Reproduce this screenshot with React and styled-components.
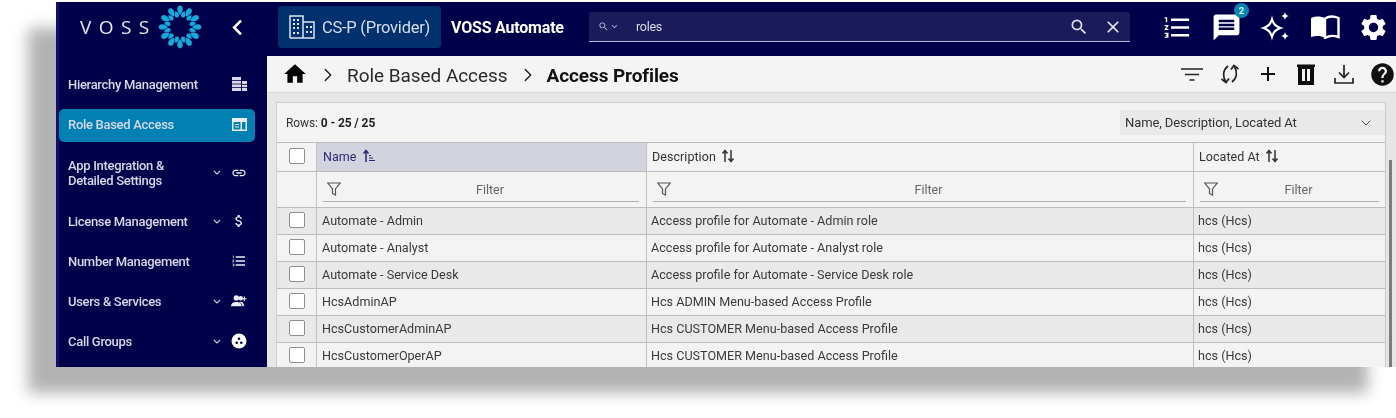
import React from 'react';
import styled, { createGlobalStyle } from 'styled-components';
import { ChevronDown, ChevronRight } from 'lucide-react';
import {
  MdAdd,
  MdAttachMoney,
  MdChevronLeft,
  MdClose,
  MdFormatListNumbered,
  MdHelp,
  MdHome,
  MdKeyboardArrowDown,
  MdLink,
  MdMessage,
  MdSearch,
  MdSettings,
} from 'react-icons/md';

const GlobalStyle = createGlobalStyle`
  html, body {
    margin: 0;
    height: 418px;
    overflow: hidden;
    background: #fff;
    font-family: Roboto, "Liberation Sans", sans-serif;
  }
`;

const Frame = styled.div`
  margin: 2px 0 0 56px;
  width: 1340px;
  height: 365px;
  display: grid;
  grid-template-columns: 211px 1fr;
  box-shadow: -28px 26px 14px rgba(0, 0, 0, 0.3);
  filter: blur(0.4px);
`;

const Sidebar = styled.aside`
  background: #00004a;
  border-left: 3px solid #10106a;
  overflow: hidden;
`;

const LogoRow = styled.div`
  height: 50px;
  padding-bottom: 4px;
  margin-bottom: 12.5px;
  display: flex;
  align-items: center;
  color: #fff;
  padding-left: 21px;
`;

const LogoText = styled.span`
  font-family: "Open Sans", sans-serif;
  font-size: 19px;
  letter-spacing: 7.4px;
  color: #e8e8ee;
  width: 77px;
`;

const Collapse = styled.span`
  margin-left: 19px;
  display: flex;
  svg {
    font-size: 31px;
  }
`;

const Nav = styled.nav`
  display: flex;
  flex-direction: column;
  gap: 7px;
`;

const NavItem = styled.div`
  width: 196px;
  box-sizing: border-box;
  height: ${(props) => (props.$tall ? '50px' : '33px')};
  padding: 0 8px 2px 9px;
  display: flex;
  align-items: center;
  border-radius: 5px;
  background: ${(props) => (props.$active ? '#0080b3' : 'transparent')};
  color: #d8d8e6;
  font-size: 13px;
  font-weight: 500;
  line-height: 15px;
  letter-spacing: -0.3px;
`;

const NavLabel = styled.span`
  flex: 1;
`;

const NavChevron = styled.span`
  display: flex;
  width: 14px;
  margin-right: 7px;
  font-size: 15px;
`;

const NavIcon = styled.span`
  display: flex;
  justify-content: center;
  width: 16px;
  font-size: 16px;
  color: #ececf4;
`;

const Main = styled.main`
  min-width: 0;
  display: flex;
  flex-direction: column;
  overflow: hidden;
  background: #e6e6e6;
`;

const TopBar = styled.header`
  height: 50px;
  padding: 0 0 4px 11px;
  flex: none;
  background: #00004a;
  display: flex;
  align-items: center;
  color: #fff;
`;

const OrgButton = styled.div`
  flex: none;
  width: 163px;
  height: 42px;
  box-sizing: border-box;
  padding-left: 11px;
  display: flex;
  align-items: center;
  gap: 7px;
  border-radius: 4px;
  background: #00306e;
  font-size: 16.5px;
  letter-spacing: -0.25px;
  color: #d9dfea;
  white-space: nowrap;
`;

const Product = styled.span`
  flex: none;
  margin-left: 10px;
  width: 138px;
  font-size: 16px;
  font-weight: 700;
  letter-spacing: -0.2px;
  white-space: nowrap;
`;

const Search = styled.div`
  flex: none;
  width: 541px;
  height: 30px;
  box-sizing: border-box;
  display: flex;
  align-items: center;
  padding: 0 7px 0 9px;
  border-radius: 3px 3px 0 0;
  border-bottom: 1px solid #b4b4d0;
  background: #1b1b5c;
  font-size: 12.5px;
  letter-spacing: -0.3px;
  color: #dcdcec;
`;

const SearchScope = styled.span`
  display: flex;
  align-items: center;
  width: 38px;
  color: #b9b9d4;
  font-size: 11px;
`;

const SearchText = styled.span`
  flex: 1;
`;

const SearchAction = styled.span`
  display: flex;
  margin-left: 14px;
  font-size: 20px;
  color: #e2e2ee;
`;

const TopIcons = styled.div`
  flex: none;
  display: grid;
  grid-template-columns: repeat(5, 49px);
  padding-left: 23px;
  justify-items: center;
  align-items: center;
  font-size: 31px;
  svg {
    display: block;
  }
`;

const BadgeWrap = styled.span`
  position: relative;
  display: block;
`;

const Badge = styled.span`
  position: absolute;
  top: -9px;
  right: -7px;
  width: 15px;
  height: 15px;
  border-radius: 50%;
  background: #0a86b4;
  color: #e6f2f8;
  font-size: 9.5px;
  font-weight: 700;
  line-height: 15px;
  text-align: center;
`;

const Crumbs = styled.div`
  height: 37px;
  flex: none;
  background: #f4f4f4;
  border-bottom: 1px solid #d8d8d8;
  box-sizing: border-box;
  display: flex;
  align-items: center;
  padding: 2px 0 0 15px;
  font-size: 19px;
  color: #2a2a2a;
  white-space: nowrap;
`;

const HomeIcon = styled(MdHome)`
  font-size: 26px;
  color: #000;
  margin: -2px 9px 0 0;
`;

const CrumbSep = styled(ChevronRight)`
  width: 22px;
  height: 22px;
  color: #222;
  margin: -1px 8px 0 0;
`;

const CrumbLink = styled.span`
  margin-right: 9px;
  letter-spacing: -0.05px;
`;

const CrumbCurrent = styled.span`
  font-weight: 700;
  color: #111;
  letter-spacing: -0.1px;
`;

const CrumbTools = styled.div`
  margin: -2px -5px 0 auto;
  display: grid;
  grid-template-columns: repeat(6, 38px);
  justify-items: center;
  align-items: center;
  color: #111;
  svg {
    display: block;
  }
`;

const Body = styled.div`
  flex: 1;
  min-height: 0;
  display: grid;
  grid-template-columns: 1110px 10px;
  padding: 9px 0 0 9px;
  overflow: hidden;
`;

const Panel = styled.section`
  box-sizing: border-box;
  background: #f3f3f3;
  border-top: 1px solid #cfcfcf;
  border-left: 1px solid #cfcfcf;
  border-right: 1px solid #c8c8c8;
  overflow: hidden;
`;

const PanelBar = styled.div`
  height: 39px;
  display: flex;
  align-items: center;
  justify-content: space-between;
  padding-left: 9px;
  font-size: 12px;
  color: #333;
  letter-spacing: -0.1px;
  b {
    font-weight: 700;
    color: #222;
  }
`;

const ColumnSelect = styled.div`
  width: 265px;
  height: 25px;
  box-sizing: border-box;
  display: flex;
  align-items: center;
  justify-content: space-between;
  padding: 0 11px 0 5px;
  background: #e9e9e9;
  color: #333;
  font-size: 13px;
  svg {
    width: 16px;
    height: 16px;
    color: #444;
  }
`;

const Row = styled.div`
  display: grid;
  grid-template-columns: 40px 330px 547px 192px;
  height: ${(props) => props.$height || 27}px;
  box-sizing: border-box;
  border-top: 1px solid #bcbcbc;
  background: ${(props) => (props.$striped ? '#e9e9e9' : '#f3f3f3')};
`;

const Cell = styled.div`
  min-width: 0;
  display: flex;
  align-items: center;
  padding: 0 0 2px 5px;
  border-right: 1px solid #c0c0c0;
  font-size: 12.6px;
  color: #3a3a3a;
  white-space: nowrap;
  &:nth-child(n + 3) {
    padding-left: 4px;
  }
  &:last-child {
    border-right: 0;
  }
`;

const CheckCell = styled(Cell)`
  justify-content: center;
  padding-left: 0;
`;

const Check = styled.span`
  width: 16px;
  height: 16px;
  box-sizing: border-box;
  border: 1px solid #8f8f8f;
  border-radius: 2px;
  background: #fff;
`;

const HeadCell = styled(Cell)`
  gap: 5px;
  background: ${(props) => (props.$sorted ? '#d3d3df' : 'transparent')};
  color: ${(props) => (props.$sorted ? '#2b2b72' : '#333')};
  font-size: 12.5px;
  letter-spacing: 0.05px;
  && {
    padding-left: ${(props) => (props.$sorted ? 6 : 5)}px;
  }
`;

const FilterCell = styled(Cell)`
  padding: 0 7px 2px 6px;
  && {
    padding-left: 6px;
  }
`;

const FilterBox = styled.div`
  flex: 1;
  height: 25px;
  margin-top: 1px;
  display: flex;
  align-items: center;
  padding-left: 4px;
  border-bottom: 1px solid #aeaeae;
  color: #666;
  font-size: 12.5px;
`;

const FilterText = styled.span`
  flex: 1;
  text-align: center;
  margin-top: 2px;
`;

const Track = styled.div`
  display: flex;
  justify-content: center;
  padding: 58px 2px 0 0;
`;

const Thumb = styled.div`
  width: 3px;
  height: 100%;
  background: #7c7c7c;
`;

const DROPS_OUTER = Array.from({ length: 12 }, (_, i) => i * 30);
const DROPS_INNER = Array.from({ length: 12 }, (_, i) => i * 30 + 15);

function Logo() {
  return (
    <svg width="46" height="46" viewBox="-23 -23 46 46" fill="#16a9dc">
      {DROPS_OUTER.map((a) => (
        <path key={a} transform={`rotate(${a}) translate(0 -17)`} d="M0 5 C-4 1 -3.4 -4 0 -4.4 C3.4 -4 4 1 0 5Z" />
      ))}
      {DROPS_INNER.map((a) => (
        <path key={a} transform={`rotate(${a}) translate(0 -13)`} d="M0 -3.6 C-3 -.5 -2.6 3 0 3.2 C2.6 3 3 -.5 0 -3.6Z" />
      ))}
    </svg>
  );
}

function BuildingIcon() {
  return (
    <svg width="26" height="24" viewBox="0 0 26 24" fill="none" stroke="#dfe6f0" strokeWidth="1.5">
      <path d="M1 23V1h13v22M14 7h11v16H1" />
      <path d="M4 5h2M8 5h2M4 9h2M8 9h2M4 13h2M8 13h2M4 18h2M8 18h2M17 12h2M21 12h2M17 17h2M21 17h2" strokeWidth="2" />
    </svg>
  );
}

function SparkleIcon() {
  return (
    <svg width="31" height="30" viewBox="0 0 31 30" fill="#fff">
      <path d="M12 3 C13.5 11 16 14 24 16 C16 18 13.5 21 12 29 C10.5 21 8 18 0 16 C8 14 10.5 11 12 3Z M12 10 C11 13 9 15 6 16 C9 17 11 19 12 22 C13 19 15 17 18 16 C15 15 13 13 12 10Z" fillRule="evenodd" />
      <path d="M25 0 C25.5 2.5 26.5 3.5 29 4 C26.5 4.5 25.5 5.5 25 8 C24.5 5.5 23.5 4.5 21 4 C23.5 3.5 24.5 2.5 25 0Z" />
      <path d="M25 20 C25.5 22.5 26.5 23.5 29 24 C26.5 24.5 25.5 25.5 25 28 C24.5 25.5 23.5 24.5 21 24 C23.5 23.5 24.5 22.5 25 20Z" />
    </svg>
  );
}

function BookIcon() {
  return (
    <svg width="30" height="24" viewBox="0 0 30 24">
      <path d="M1 3 C6 1 11 1 15 3.5 V23 C11 20.5 6 20.5 1 22Z" fill="#fff" />
      <path d="M15 3.5 C19 1 24 1 28.5 3 V22 C24 20.5 19 20.5 15 23Z" fill="none" stroke="#fff" strokeWidth="2.4" />
    </svg>
  );
}

function FilterLines() {
  return (
    <svg width="22" height="14" viewBox="0 0 22 14" stroke="#222" strokeWidth="1.7">
      <path d="M0 2h22M4 7.5h14M8.5 13h5" />
    </svg>
  );
}

function RefreshIcon() {
  return (
    <svg width="20" height="22" viewBox="0 0 20 22" fill="none" stroke="#222" strokeWidth="1.8">
      <path d="M8 3 C3 7 2.5 13 5.5 18.5" />
      <path d="M1.5 16 L6 19.5 L9 15.5" />
      <path d="M12 19 C17 15 17.5 9 14.5 3.5" />
      <path d="M18.5 6 L14 2.5 L11 6.5" />
    </svg>
  );
}

function TrashIcon() {
  return (
    <svg width="18" height="22" viewBox="0 0 18 22">
      <path d="M0 1.5h18v2.5h-1V22H1V4H0Z M5 6v12h3V6Z M10 6v12h3V6Z" fill="#0c0c0c" fillRule="evenodd" />
    </svg>
  );
}

function DownloadIcon() {
  return (
    <svg width="20" height="20" viewBox="0 0 20 20" fill="none" stroke="#222" strokeWidth="1.7">
      <path d="M10 1v12M5 8.5l5 5 5-5M1 14v5h18v-5" />
    </svg>
  );
}

function FunnelIcon() {
  return (
    <svg width="14" height="14" viewBox="0 0 14 14" fill="none" stroke="#555" strokeWidth="1.2">
      <path d="M.8 1h12.4L8.5 7v6L5.5 11.5V7Z" />
    </svg>
  );
}

function SortIcon() {
  return (
    <svg width="14" height="14" viewBox="0 0 14 14" fill="none" stroke="#333" strokeWidth="1.5">
      <path d="M4 13V2M1.5 4.5 4 1.5l2.5 3M10 1v11M7.5 9.5 10 12.5l2.5-3" />
    </svg>
  );
}

function SortAscIcon() {
  return (
    <svg width="14" height="14" viewBox="0 0 14 14" fill="none" stroke="#2b2b72" strokeWidth="1.2">
      <path d="M4 13V2M1.5 4.5 4 1.5l2.5 3" strokeWidth="1.5" />
      <path d="M7 6.5h2M7 9h4M7 11.5h6" />
    </svg>
  );
}

function TableCardIcon() {
  return (
    <svg width="15" height="13" viewBox="0 0 15 13">
      <path d="M0 0h15v13H0Z M1.5 4v7.5h7V4Z M10 4v7.5h3.5V4Z" fill="#ececf4" fillRule="evenodd" />
      <path d="M3 6.5h4M3 9h4" stroke="#ececf4" />
    </svg>
  );
}

function HierarchyIcon() {
  return (
    <svg width="15" height="14" viewBox="0 0 15 14" fill="#d8d8e6">
      <path d="M0 0h9v14H0ZM10 4h5v10h-5Z" />
      <path d="M0 3.5h9M0 7h9M0 10.5h9M10 7.5h5M10 10.5h5" stroke="#00004a" strokeWidth=".8" />
    </svg>
  );
}

function UsersIcon() {
  return (
    <svg width="18" height="14" viewBox="0 0 18 14" fill="#ececf4">
      <circle cx="6" cy="3.5" r="3" />
      <circle cx="11" cy="4" r="2.5" />
      <path d="M0 13c0-3.5 2.5-5 6-5s6 1.500 6 5Z" />
      <path d="M9 8c3-.5 5.500.5 6 5h-2c0-2-1.500-4-4-5Z" />
      <path d="M15 2v5M12.5 4.5h5" stroke="#ececf4" strokeWidth="1.3" />
    </svg>
  );
}

function GroupIcon() {
  return (
    <svg width="16" height="16" viewBox="0 0 16 16">
      <circle cx="8" cy="8" r="7.5" fill="#fff" />
      <circle cx="8" cy="5.8" r="1.3" fill="#00004a" />
      <circle cx="5.7" cy="9.8" r="1.3" fill="#00004a" />
      <circle cx="10.3" cy="9.8" r="1.3" fill="#00004a" />
    </svg>
  );
}

const NAV_ITEMS = [
  { label: 'Hierarchy Management', icon: <HierarchyIcon /> },
  { label: 'Role Based Access', icon: <TableCardIcon />, active: true },
  { label: <>App Integration &<br />Detailed Settings</>, icon: <MdLink />, chevron: true, tall: true },
  { label: 'License Management', icon: <MdAttachMoney />, chevron: true },
  { label: 'Number Management', icon: <MdFormatListNumbered /> },
  { label: 'Users & Services', icon: <UsersIcon />, chevron: true },
  { label: 'Call Groups', icon: <GroupIcon />, chevron: true },
];

const ROWS = [
  ['Automate - Admin', 'Access profile for Automate - Admin role'],
  ['Automate - Analyst', 'Access profile for Automate - Analyst role'],
  ['Automate - Service Desk', 'Access profile for Automate - Service Desk role'],
  ['HcsAdminAP', 'Hcs ADMIN Menu-based Access Profile'],
  ['HcsCustomerAdminAP', 'Hcs CUSTOMER Menu-based Access Profile'],
  ['HcsCustomerOperAP', 'Hcs CUSTOMER Menu-based Access Profile'],
];

function FilterInput() {
  return (
    <FilterCell>
      <FilterBox>
        <FunnelIcon />
        <FilterText>Filter</FilterText>
      </FilterBox>
    </FilterCell>
  );
}

export default function App() {
  return (
    <>
      <GlobalStyle />
      <Frame>
        <Sidebar>
          <LogoRow>
            <LogoText>VOSS</LogoText>
            <Logo />
            <Collapse><MdChevronLeft /></Collapse>
          </LogoRow>
          <Nav>
            {NAV_ITEMS.map((item, i) => (
              <NavItem key={i} $active={item.active} $tall={item.tall}>
                <NavLabel>{item.label}</NavLabel>
                {item.chevron && <NavChevron><MdKeyboardArrowDown /></NavChevron>}
                <NavIcon>{item.icon}</NavIcon>
              </NavItem>
            ))}
          </Nav>
        </Sidebar>
        <Main>
          <TopBar>
            <OrgButton><BuildingIcon />CS-P (Provider)</OrgButton>
            <Product>VOSS Automate</Product>
            <Search>
              <SearchScope><MdSearch /><MdKeyboardArrowDown /></SearchScope>
              <SearchText>roles</SearchText>
              <SearchAction><MdSearch /></SearchAction>
              <SearchAction><MdClose /></SearchAction>
            </Search>
            <TopIcons>
              <MdFormatListNumbered />
              <BadgeWrap><MdMessage /><Badge>2</Badge></BadgeWrap>
              <SparkleIcon />
              <BookIcon />
              <MdSettings />
            </TopIcons>
          </TopBar>
          <Crumbs>
            <HomeIcon />
            <CrumbSep strokeWidth={1.6} />
            <CrumbLink>Role Based Access</CrumbLink>
            <CrumbSep strokeWidth={1.6} />
            <CrumbCurrent>Access Profiles</CrumbCurrent>
            <CrumbTools>
              <FilterLines />
              <RefreshIcon />
              <MdAdd size={24} />
              <TrashIcon />
              <DownloadIcon />
              <MdHelp size={27} />
            </CrumbTools>
          </Crumbs>
          <Body>
            <Panel>
              <PanelBar>
                <span>Rows: <b>0 - 25 / 25</b></span>
                <ColumnSelect>Name, Description, Located At<ChevronDown strokeWidth={1.5} /></ColumnSelect>
              </PanelBar>
              <Row $height={29}>
                <CheckCell><Check /></CheckCell>
                <HeadCell $sorted>Name <SortAscIcon /></HeadCell>
                <HeadCell>Description <SortIcon /></HeadCell>
                <HeadCell>Located At <SortIcon /></HeadCell>
              </Row>
              <Row $height={36}>
                <CheckCell />
                <FilterInput />
                <FilterInput />
                <FilterInput />
              </Row>
              {ROWS.map(([name, description], i) => (
                <Row key={name} $striped={i % 2 === 0}>
                  <CheckCell><Check /></CheckCell>
                  <Cell>{name}</Cell>
                  <Cell>{description}</Cell>
                  <Cell>hcs (Hcs)</Cell>
                </Row>
              ))}
            </Panel>
            <Track><Thumb /></Track>
          </Body>
        </Main>
      </Frame>
    </>
  );
}
